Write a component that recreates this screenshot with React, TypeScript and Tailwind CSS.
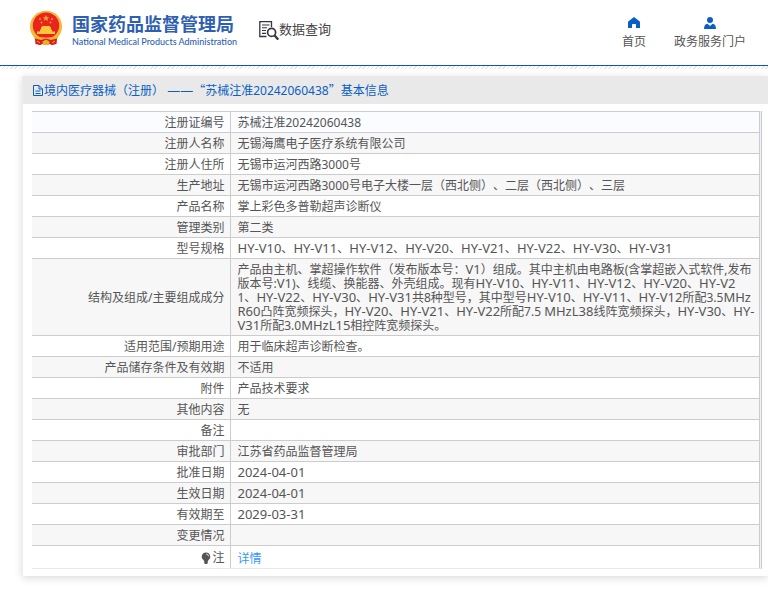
import type { ReactNode } from "react";

interface InfoRow {
  label: string;
  value: string[];
}

const rows: InfoRow[] = [
  { label: "注册证编号", value: ["苏械注准20242060438"] },
  { label: "注册人名称", value: ["无锡海鹰电子医疗系统有限公司"] },
  { label: "注册人住所", value: ["无锡市运河西路3000号"] },
  { label: "生产地址", value: ["无锡市运河西路3000号电子大楼一层（西北侧）、二层（西北侧）、三层"] },
  { label: "产品名称", value: ["掌上彩色多普勒超声诊断仪"] },
  { label: "管理类别", value: ["第二类"] },
  { label: "型号规格", value: ["HY-V10、HY-V11、HY-V12、HY-V20、HY-V21、HY-V22、HY-V30、HY-V31"] },
  {
    label: "结构及组成/主要组成成分",
    value: [
      "产品由主机、掌超操作软件（发布版本号：V1）组成。其中主机由电路板(含掌超嵌入式软件,发布",
      "版本号:V1)、线缆、换能器、外壳组成。现有HY-V10、HY-V11、HY-V12、HY-V20、HY-V2",
      "1、HY-V22、HY-V30、HY-V31共8种型号，其中型号HY-V10、HY-V11、HY-V12所配3.5MHz",
      "R60凸阵宽频探头，HY-V20、HY-V21、HY-V22所配7.5 MHzL38线阵宽频探头，HY-V30、HY-",
      "V31所配3.0MHzL15相控阵宽频探头。",
    ],
  },
  { label: "适用范围/预期用途", value: ["用于临床超声诊断检查。"] },
  { label: "产品储存条件及有效期", value: ["不适用"] },
  { label: "附件", value: ["产品技术要求"] },
  { label: "其他内容", value: ["无"] },
  { label: "备注", value: [] },
  { label: "审批部门", value: ["江苏省药品监督管理局"] },
  { label: "批准日期", value: ["2024-04-01"] },
  { label: "生效日期", value: ["2024-04-01"] },
  { label: "有效期至", value: ["2029-03-31"] },
  { label: "变更情况", value: [] },
];

const CODE_PATTERN = /([A-Z][A-Za-z0-9-]*|\d+-\d+-\d+)/;

// model codes, units and dates are set one size up from the Chinese text
function withCodes(text: string): ReactNode[] {
  return text.split(CODE_PATTERN).map((part, i) =>
    i % 2 === 1 ? (
      <span key={i} className="text-[13px] leading-none">
        {part}
      </span>
    ) : (
      part
    ),
  );
}

function Emblem() {
  return (
    <svg viewBox="0 0 32 36" className="h-9 w-8" aria-hidden="true">
      <path d="M5 25 L27 25 L26 33 L22 35 L16 32 L10 35 L6 33 Z" fill="#d9201a" />
      <ellipse cx="16" cy="16.5" rx="16" ry="15.8" fill="#f7b53c" />
      <ellipse cx="16" cy="15.5" rx="13.2" ry="13" fill="#e8251d" />
      <path
        d="M16 5 l1 2.1 2.2.2 -1.7 1.5 .6 2.2 -2.1-1.2 -2.1 1.2 .6-2.2 -1.7-1.5 2.2-.2z"
        fill="#f59a35"
      />
      <g fill="#f59a35">
        <circle cx="10" cy="9" r="0.9" />
        <circle cx="11.5" cy="12.5" r="0.9" />
        <circle cx="20.5" cy="12.5" r="0.9" />
        <circle cx="22" cy="9" r="0.9" />
      </g>
      <path
        d="M11 17.5 L12.5 16 H19.5 L21 17.5 V19.5 H22 V21.5 H25 V24 H7 V21.5 H10 V19.5 H11 Z"
        fill="#fbc63c"
      />
      <path d="M3 24.5 Q9 28 16 27.5 Q23 28 29 24.5 L27 29.5 Q22 30.5 16 29 Q10 30.5 5 29.5 Z" fill="#f2b52c" />
      <path d="M5 28.5 L11 30 L16 28.5 L21 30 L27 28.5 L26.5 34 L22 35 L16 32 L10 35 L5.5 34 Z" fill="#d8201a" />
      <path d="M12.5 31.5 L16 29.5 L19.5 31.5 L19 35 H13 Z" fill="#f2a936" />
      <path d="M7 31 L10 33 M25 31 L22 33" stroke="#f2b52c" strokeWidth="1" />
    </svg>
  );
}

function QueryIcon() {
  return (
    <svg viewBox="0 0 20 20" className="h-5 w-5" fill="none" stroke="#35353f" aria-hidden="true">
      <path d="M7.5 16.5 H0.8 V1.6 H12.5 V7" strokeWidth="1.3" />
      <path d="M3 5 H10.5 M3 7.8 H8 M3 10.5 H7 M3 13.4 H7" strokeWidth="1.1" />
      <circle cx="12.6" cy="12.4" r="4" strokeWidth="1.7" />
      <path d="M15.6 15.6 L19.2 19.6" strokeWidth="2.2" />
    </svg>
  );
}

function HomeIcon() {
  return (
    <svg viewBox="0 0 12 12" className="h-3 w-3" fill="#0b5fc4" aria-hidden="true">
      <path d="M6 0 L11.5 4.2 Q12 4.6 12 5.4 V11 H8 V7.8 Q8 7 7.2 7 H4.8 Q4 7 4 7.8 V11 H0 V5.4 Q0 4.6 0.5 4.2 Z" />
    </svg>
  );
}

function UserIcon() {
  return (
    <svg viewBox="0 0 12 12" className="h-3 w-3" fill="#0b5fc4" aria-hidden="true">
      <circle cx="6" cy="3" r="3" />
      <path d="M0 12 Q0 7.4 3.4 6.8 L6 9 L8.6 6.8 Q12 7.4 12 12 Z" />
    </svg>
  );
}

function DocIcon() {
  return (
    <svg viewBox="0 0 12 12" className="h-3 w-3" fill="none" stroke="#0b5fc4" aria-hidden="true">
      <path d="M1.5 0.5 H7 L10.5 4 V10.5 H1.5 Z M7 0.5 V4 H10.5 M3.5 6 H8.5 M3.5 8.5 H8.5" />
    </svg>
  );
}

function BulbIcon() {
  return (
    <svg viewBox="0 0 10 12" className="h-3 w-[10px]" aria-hidden="true">
      <path d="M5 0.5 A4.2 4.2 0 0 1 7.2 8.3 V9 H2.8 V8.3 A4.2 4.2 0 0 1 5 0.5 Z" fill="#555" />
      <path d="M3.2 9 H6.8 V11 L6 12 H4 L3.2 11 Z" fill="#555" />
      <path d="M5.2 2 Q7.4 2.2 7.5 4.4" fill="none" stroke="#fff" strokeWidth="0.8" />
    </svg>
  );
}

export default function App() {
  return (
    <div className="min-h-screen bg-white pb-4 font-['Noto_Sans','Noto_Sans_CJK_SC',sans-serif] text-xs text-[#555] [text-spacing-trim:space-all]">
      <header className="flex h-[66px] items-start justify-between border-b border-[#0a57ae] pr-[22px] pl-[30px]">
        <div className="flex items-start">
          <a href="#" className="flex items-start gap-[10px] pt-[10px] text-[#2f5fb0]">
            <Emblem />
            <span className="flex w-[162px] flex-col pt-[3px] whitespace-nowrap">
              <span className="text-lg leading-[22px] font-bold">国家药品监督管理局</span>
              <span className="font-[Lato,sans-serif] text-[9px] leading-[14px] font-medium">
                National Medical Products Administration
              </span>
            </span>
          </a>
          <a href="#" className="ml-[25px] flex items-start pt-5 text-[#444]">
            <QueryIcon />
            <span className="text-[13px] leading-[18px]">数据查询</span>
          </a>
        </div>
        <nav className="flex gap-7 pt-[17px] text-[#555]">
          <a href="#" className="flex flex-col items-center gap-[3px]">
            <HomeIcon />
            <span className="leading-5">首页</span>
          </a>
          <a href="#" className="flex flex-col items-center gap-[3px]">
            <UserIcon />
            <span className="leading-5">政务服务门户</span>
          </a>
        </nav>
      </header>
      <div className="h-[3px] bg-[repeating-linear-gradient(135deg,#e9e5e3_0_1px,#fff_1px_3px)]" />

      <main className="mt-[7px] ml-[22px] border-l border-[#eee] bg-white shadow-[0_2px_8px_rgba(0,0,0,0.15)]">
        <h1 className="flex h-7 items-center bg-[#e9e9e9] pt-px pl-[9px] text-[#0b5fc4]">
          <DocIcon />
          <span>
            境内医疗器械（注册） <span className="text-[13px] leading-none">——</span>
            <span className="font-['Noto_Sans_CJK_SC',sans-serif] leading-none">“</span>
            苏械注准20242060438
            <span className="font-['Noto_Sans_CJK_SC',sans-serif] leading-none">”</span>
            基本信息
          </span>
        </h1>
        <div className="pt-[7px] pr-[6px] pb-[7px] pl-[9px]">
          <div className="border-r border-b border-r-[#c8c8d2] border-b-[#e6e9f5] bg-[#f1f1f8] pr-px">
            <table className="w-full border-collapse border-r border-[#ccc] bg-white">
              <tbody>
                {rows.map((row) => (
                  <tr
                    key={row.label}
                    className="h-[21px] border-t border-[#ccc] first:bg-[#fafcff] even:bg-[#f7f7f7]"
                  >
                    <th
                      scope="row"
                      className="w-[198px] border-r border-[#ccc] pt-1 pr-[5px] pb-[2px] text-right leading-[14px] font-normal whitespace-nowrap"
                    >
                      {row.label}
                    </th>
                    <td className="pt-1 pb-[2px] pl-[7px] leading-[14px] whitespace-nowrap">
                      {row.value.map((line) => (
                        <p key={line}>{withCodes(line)}</p>
                      ))}
                    </td>
                  </tr>
                ))}
                <tr className="h-[22px] border-t border-[#ccc]">
                  <th scope="row" className="border-r border-[#ccc] pt-[2px] pr-[5px] font-normal">
                    <span className="flex items-center justify-end gap-px">
                      <BulbIcon />
                      注
                    </span>
                  </th>
                  <td className="pt-[4px] pl-[7px] leading-[18px]">
                    <a href="#" className="text-[#3399ff]">
                      详情
                    </a>
                  </td>
                </tr>
              </tbody>
            </table>
          </div>
        </div>
      </main>
    </div>
  );
}
